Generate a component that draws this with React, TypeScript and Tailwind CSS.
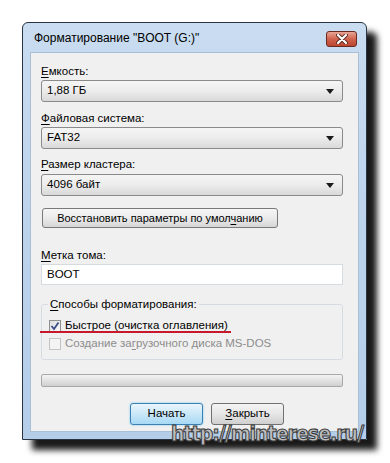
import React from 'react';

const font = "font-['Liberation_Sans',Arial,sans-serif]";

function Arrow() {
  return (
    <svg width="8" height="5" viewBox="0 0 8 5">
      <polygon points="0,0 8,0 4,5" fill="#1a1a1a" />
    </svg>
  );
}

function Combo({ value }: { value: string }) {
  return (
    <div className="w-[302px] h-[22px] flex items-center justify-between pl-[5px] pr-[8px] border border-[#8a8a8a] rounded-[3px] bg-gradient-to-b from-[#f5f5f5] via-[#ececec] to-[#d9d9d9] text-[11.5px] text-black">
      <span>{value}</span>
      <Arrow />
    </div>
  );
}

function Label({ first, rest }: { first: string; rest: string }) {
  return (
    <div className="h-[14px] leading-[14px] text-[11.5px] text-black">
      <span className="underline underline-offset-2">{first}</span>
      {rest}
    </div>
  );
}

export default function App() {
  return (
    <div className={`w-[390px] h-[463px] bg-white pt-[22px] pl-[22px] ${font}`}>
      {/* window */}
      <div className="relative w-[345px] h-[418px] rounded-t-[6px] border border-[#2a3440] bg-gradient-to-b from-[#c9dcf0] via-[#bcd3ec] to-[#b4cde9] shadow-[10px_10px_6px_rgba(0,0,0,0.9)] flex flex-col">
        {/* title bar */}
        <div className="h-[29px] flex items-center justify-between pl-[11px] pr-[9px]">
          <span className="text-[12px] text-black">Форматирование "BOOT (G:)"</span>
          <div className="w-[31px] h-[16px] mt-[2px] rounded-[3px] border border-[#6b2a20] bg-gradient-to-b from-[#e8a595] via-[#d0634d] to-[#bb4630] flex items-center justify-center">
            <svg width="12" height="10" viewBox="0 0 12 10">
              <path d="M2 1 L10 9 M10 1 L2 9" stroke="#5a2a22" strokeWidth="4" strokeLinecap="round" />
              <path d="M2 1 L10 9 M10 1 L2 9" stroke="#ffffff" strokeWidth="2.2" strokeLinecap="round" />
            </svg>
          </div>
        </div>

        {/* client area */}
        <div className="mx-[7px] mb-[7px] flex-1 bg-[#f0f0f0] border border-[#a9bfd6] pl-[10px] pt-[11px] flex flex-col">
          <Label first="Е" rest="мкость:" />
          <div className="mt-[2px]"><Combo value="1,88 ГБ" /></div>

          <div className="mt-[9px]"><Label first="Ф" rest="айловая система:" /></div>
          <div className="mt-[2px]"><Combo value="FAT32" /></div>

          <div className="mt-[8px]"><Label first="Р" rest="азмер кластера:" /></div>
          <div className="mt-[3px]"><Combo value="4096 байт" /></div>

          <div className="mt-[12px] w-[236px] h-[20px] ml-[1px] border border-[#7a7a7a] rounded-[3px] bg-gradient-to-b from-[#f6f6f6] via-[#ebebeb] to-[#d6d6d6] flex items-center justify-center text-[11px] text-black">
            <span>Восстановить параметры по умол<span className="underline underline-offset-2">ч</span>анию</span>
          </div>

          <div className="mt-[20px]"><Label first="М" rest="етка тома:" /></div>
          <div className="mt-[2px] w-[302px] h-[21px] bg-white border border-[#d6dbe0] flex items-center pl-[5px] text-[11.5px] text-black">BOOT</div>

          {/* group box */}
          <div className="relative mt-[19px] w-[302px] h-[56px] border border-[#d5dbe0] rounded-[3px] pl-[7px] pt-[13px]">
            <div className="absolute -top-[8px] left-[6px] px-[2px] bg-[#f0f0f0] text-[11.5px] leading-[14px] text-black">
              <span className="underline underline-offset-2">С</span>пособы форматирования:
            </div>
            <div className="flex items-center h-[15px] gap-[4px]">
              <div className="w-[12px] h-[12px] border border-[#8e8f8f] bg-gradient-to-br from-[#dcdcdc] to-[#fbfbfb] flex items-center justify-center">
                <svg width="10" height="10" viewBox="0 0 10 10">
                  <path d="M1.5 5 L4 8 L8.5 1.5" stroke="#3b4d8a" strokeWidth="1.8" fill="none" />
                </svg>
              </div>
              <span className="text-[11.5px] text-black">Быстрое (очистка оглавления)</span>
            </div>
            <div className="flex items-center h-[15px] gap-[4px] mt-[3px]">
              <div className="w-[12px] h-[12px] border border-[#c4c4c4] bg-[#f4f4f4]" />
              <span className="text-[11.5px] text-[#8d8d8d]">Создание за<span className="underline underline-offset-2">г</span>рузочного диска MS-DOS</span>
            </div>
            {/* red highlight line */}
            <div className="absolute left-[-2px] top-[26px] w-[191px] h-[2px] bg-[#c8182c]" />
          </div>

          {/* progress */}
          <div className="mt-[14px] w-[302px] h-[13px] border border-[#a8a8a8] rounded-[2px] bg-gradient-to-b from-[#f3f3f3] via-[#e2e2e2] to-[#d0d0d0]" />

          {/* buttons */}
          <div className="mt-[16px] flex gap-[8px] pl-[89px]">
            <div className="w-[73px] h-[22px] border border-[#3c7fb1] rounded-[3px] bg-gradient-to-b from-[#eaf6fd] via-[#c9e7f8] to-[#a7d9f5] shadow-[0_0_2px_#5fc1f1] flex items-center justify-center text-[11.5px] text-black">Начать</div>
            <div className="w-[73px] h-[22px] border border-[#707070] rounded-[3px] bg-gradient-to-b from-[#f4f4f4] via-[#e6e6e6] to-[#cfcfcf] flex items-center justify-center text-[11.5px] text-black">
              <span><span className="underline underline-offset-2">З</span>акрыть</span>
            </div>
          </div>
        </div>

        {/* watermark */}
        <div className="absolute left-[148px] top-[399px] text-[19px] leading-[20px] font-bold tracking-[-1px] scale-y-110 origin-top-left text-[#bdbdbd] font-['DejaVu_Sans',sans-serif] [-webkit-text-stroke:1px_#3a3a3a]">
          http://minterese.ru/
        </div>
      </div>
    </div>
  );
}
